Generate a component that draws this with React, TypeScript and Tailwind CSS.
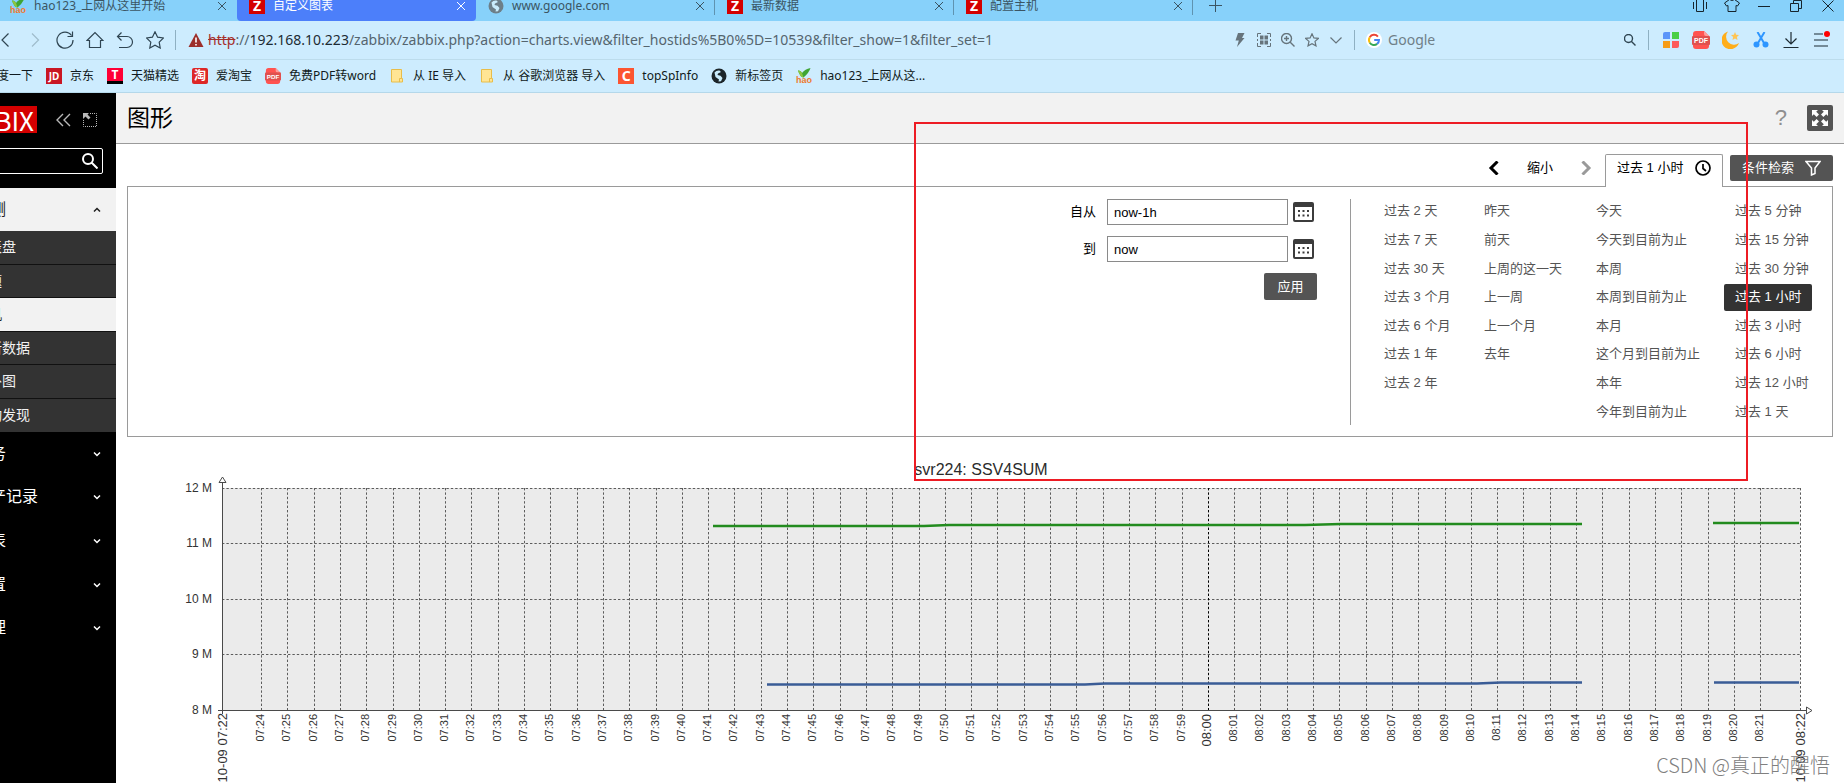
import type { ReactNode } from 'react'
import clsx from 'clsx'

/* ---------- icons ---------- */

type IconProps = { d: string; size?: number; className?: string; width?: number }

function Stroke({ d, size = 18, className, width = 1 }: IconProps) {
  return (
    <svg
      viewBox={`0 0 ${size} ${size}`}
      width={size}
      height={size}
      className={clsx('shrink-0', className)}
      fill="none"
      stroke="currentColor"
      strokeWidth={width}
      aria-hidden="true"
    >
      <path d={d} />
    </svg>
  )
}

function HaoIcon() {
  return (
    <svg viewBox="0 0 16 16" className="h-4 w-4 shrink-0" aria-hidden="true">
      <path d="M2 2.500q3-.5 4 2.500Q9 1 14.500 0 13 5 7.500 9.500 4 9 2 2.500z" fill="#3fa535" />
      <path d="M2 2.500q3-.5 4 2.500l1.500 4.500Q4 9 2 2.500z" fill="#8cc63f" />
      <text x="0" y="15" fontSize="9" fontWeight="700" fill="#ee7a30" fontFamily="Liberation Sans, sans-serif">
        hao
      </text>
    </svg>
  )
}

function Badge({ label, className }: { label: string; className: string }) {
  return (
    <span
      aria-hidden="true"
      className={clsx('flex h-4 w-4 shrink-0 items-center justify-center leading-4 text-white', className)}
    >
      {label}
    </span>
  )
}

function ZIcon() {
  return <Badge label="Z" className="bg-[#d40000] text-sm font-bold" />
}

function GlobeIcon({ className }: { className?: string }) {
  return (
    <svg viewBox="0 0 16 16" className={clsx('h-4 w-4 shrink-0', className)} aria-hidden="true">
      <circle cx="8" cy="8" r="7.500" fill="currentColor" />
      <path
        d="M3.500 4.500Q5.500 2 8.500 2.500L10 4 7 5.500 6.500 7l3 .8 2 2.200-1.500 3.200-2.500.3L8 11.500 4.500 9z"
        fill="#c9ecfc"
      />
    </svg>
  )
}

function PdfIcon({ className }: { className: string }) {
  return (
    <svg viewBox="0 0 18 18" className={clsx('shrink-0', className)} aria-hidden="true">
      <path d="M4 0h8l5 5v10a3 3 0 0 1-3 3H4a3 3 0 0 1-3-3V3a3 3 0 0 1 3-3z" fill="#ff5350" />
      <path d="M12 0l5 5h-3a2 2 0 0 1-2-2z" fill="#ff9e9b" />
      <rect x="0" y="5" width="18" height="9" rx="1" fill="#e0504e" />
      <text
        x="9"
        y="12"
        textAnchor="middle"
        fontSize="7"
        fontWeight="700"
        fill="#fff"
        fontFamily="Liberation Sans, sans-serif"
      >
        PDF
      </text>
    </svg>
  )
}

function FolderIcon() {
  return (
    <svg viewBox="0 0 16 16" className="h-4 w-4 shrink-0" aria-hidden="true">
      <path d="M2.500 1.500h10v9h1v3.500h-11z" fill="#ffe594" stroke="#e8bd4a" />
      <path d="M10.500 14v-3.500h2" fill="none" stroke="#e8bd4a" />
    </svg>
  )
}

function GoogleIcon() {
  return (
    <svg viewBox="0 0 16 16" className="h-4 w-4 shrink-0" fill="none" strokeWidth="2" aria-hidden="true">
      <circle cx="8" cy="8" r="8" fill="#fff" />
      <path d="M11.900 4.600A5 5 0 0 0 3.800 5.300" stroke="#ea4335" />
      <path d="M3.800 5.300a5 5 0 0 0 0 5.400" stroke="#fbbc05" />
      <path d="M3.800 10.700a5 5 0 0 0 7.300 1.200" stroke="#34a853" />
      <path d="M11.100 11.900A5 5 0 0 0 13 8H8.200" stroke="#4285f4" />
    </svg>
  )
}

function Chevron({ up }: { up?: boolean }) {
  return <Stroke size={8} d={up ? 'M1 5.500l3-3 3 3' : 'M1 2.500l3 3 3-3'} className="stroke-[1.500]" />
}

function CalendarIcon() {
  return (
    <svg viewBox="0 0 21 20" className="h-5 w-[21px]" aria-hidden="true">
      <rect x="1" y="1" width="19" height="18" rx="1" fill="#fff" stroke="#3c3c3c" strokeWidth="2" />
      <rect x="1" y="1" width="19" height="4" fill="#3c3c3c" />
      <path d="M5 9h2m2.500 0h2m2.500 0h2M5 13.500h2m2.500 0h2m2.500 0h2" stroke="#3c3c3c" strokeWidth="2" />
    </svg>
  )
}

/* ---------- browser ---------- */

const tabs: { title: string; icon: ReactNode; active?: boolean; divider?: boolean }[] = [
  { title: 'hao123_上网从这里开始', icon: <HaoIcon /> },
  { title: '自定义图表', icon: <ZIcon />, active: true },
  { title: 'www.google.com', icon: <GlobeIcon className="text-[#6d7f89]" />, divider: true },
  { title: '最新数据', icon: <ZIcon />, divider: true },
  { title: '配置主机', icon: <ZIcon />, divider: true },
]

const windowButtons = [
  { label: '振动', size: 14, d: 'M.5 3v7M13.500 3v7M3.500 .5h7v12h-7z' },
  { label: '皮肤', size: 16, d: 'M5.500 1.500q2.500 2 5 0L15.500 5l-2 3-1.500-.5v6H4v-6L2.500 8l-2-3z' },
  { label: '最小化', size: 12, d: 'M0 6.500h12' },
  { label: '还原', size: 12, d: 'M.5 3.500h8v8h-8zM3.500 3V.5h8v8H9' },
  { label: '关闭', size: 12, d: 'M.5 .5l11 11M11.500 .5l-11 11' },
]

function TabBar() {
  return (
    <div className="h-[21px] overflow-hidden bg-[#87d1fa]">
      <div className="-mt-[10px] flex h-[31px] items-center text-xs text-[#3b5563]">
        <div className="-ml-[2px] flex h-full">
          {tabs.map((tab) => (
            <div
              key={tab.title}
              className={clsx(
                'relative flex w-[239px] items-center gap-2 pr-[10px] pl-3',
                tab.active && 'rounded-b-sm bg-[#4c7ffa] text-white',
              )}
            >
              {tab.icon}
              <span className="flex-1">{tab.title}</span>
              <button type="button" aria-label="关闭标签页">
                <Stroke size={10} d="M1 1l8 8M9 1L1 9" />
              </button>
              {tab.divider && <span className="absolute right-0 bottom-[6px] h-5 w-px bg-[#5f93b0]" />}
            </div>
          ))}
        </div>
        <button type="button" aria-label="新建标签页" className="ml-4 flex-none">
          <Stroke size={14} d="M0 6.500h13M6.500 0v13" />
        </button>
        <div className="ml-auto flex items-center text-[#16242c]">
          {windowButtons.map((b) => (
            <button key={b.label} type="button" aria-label={b.label} className="flex w-8 justify-center">
              <Stroke size={b.size} d={b.d} />
            </button>
          ))}
        </div>
      </div>
    </div>
  )
}

const navButtons = [
  { label: '后退', d: 'M12.500 2.500L6 9l6.500 6.500' },
  { label: '前进', d: 'M6 2.500L12.500 9 6 15.500', muted: true },
  { label: '刷新', d: 'M15.500 4.500a8 8 0 1 0 1.500 4.500M16.500 .5v5h-5' },
  { label: '主页', d: 'M1 9.500l8-8 8 8h-2.500v7h-11v-7z' },
  { label: '恢复', d: 'M5.500 1.500l-4 4 4 4M1.500 5.500H11a5 5 0 0 1 0 11H3' },
  { label: '收藏', d: 'M9 .8l2.600 5.400 5.900.8-4.300 4.100 1 5.900L9 14.200 3.800 17l1-5.900L.5 7l5.900-.8z' },
]

function AddressBar() {
  return (
    <div className="flex h-[39px] items-center border-b border-[#bcdcec] pr-2 text-sm">
      <div className="-ml-[10px] flex text-[#2f4552]">
        {navButtons.map((b) => (
          <button
            key={b.label}
            type="button"
            aria-label={b.label}
            className={clsx('flex w-[30px] justify-center', b.muted && 'text-[#9fbccb]')}
          >
            <Stroke d={b.d} className="stroke-[1.200]" />
          </button>
        ))}
      </div>
      <span className="ml-[5px] h-5 w-px bg-[#8fb0c2]" />
      <svg viewBox="0 0 16 14" className="ml-3 h-3.5 w-4 shrink-0" aria-hidden="true">
        <path d="M8 0l7.500 14H.5z" fill="#9c2f2b" />
        <path d="M8 4.500v5M8 11v1.500" stroke="#fff" strokeWidth="1.600" />
      </svg>
      <div className="ml-1 flex-1 whitespace-nowrap text-[#55656e]">
        <span className="text-[#a5302c] line-through">http</span>://
        <span className="text-[#1d2b33]">192.168.10.223</span>
        /zabbix/zabbix.php?action=charts.view&amp;filter_hostids%5B0%5D=10539&amp;filter_show=1&amp;filter_set=1
      </div>
      <div className="flex text-[#66747c]">
        <button type="button" aria-label="极速模式" className="flex w-6 justify-center">
          <svg viewBox="0 0 10 14" className="h-3.5 w-2.5" fill="currentColor" aria-hidden="true">
            <path d="M3 0h6.500L7 5h2.500L2 14l1.800-6.500H.5z" />
          </svg>
        </button>
        <button type="button" aria-label="二维码" className="flex w-6 justify-center">
          <svg viewBox="0 0 14 14" className="h-3.5 w-3.5" fill="none" stroke="currentColor" aria-hidden="true">
            <path d="M4 .5H.5V4M10 .5h3.500V4M4 13.500H.5V10M10 13.500h3.500V10M.5 6v2M13.500 6v2" />
            <path d="M3 4.500h3.500M7.500 4.500H11M3 9.500h3.500M7.500 9.500H11" strokeWidth="4" />
          </svg>
        </button>
        <button type="button" aria-label="缩放" className="flex w-6 justify-center">
          <Stroke
            size={14}
            d="M9.500 9.500L13.500 13.500M5.500 3v5M3 5.500h5M10.500 5.500a5 5 0 1 1-10 0 5 5 0 0 1 10 0z"
            className="stroke-[1.400]"
          />
        </button>
        <button type="button" aria-label="加入收藏" className="flex w-6 justify-center">
          <Stroke
            size={14}
            d="M7 .8l1.900 4.100 4.500.5-3.400 3 1 4.500L7 10.700 3 12.900l1-4.500-3.400-3 4.500-.5z"
            className="stroke-[1.200]"
          />
        </button>
        <button type="button" aria-label="更多" className="flex w-6 items-center justify-center">
          <Stroke size={12} d="M.5 3.500L6 9l5.500-5.500" className="stroke-[1.200]" />
        </button>
      </div>
      <span className="ml-[6px] h-5 w-px bg-[#8fb0c2]" />
      <div className="flex w-[293px] items-center pr-3 pl-[11px]">
        <GoogleIcon />
        <input
          type="text"
          aria-label="搜索"
          placeholder="Google"
          className="ml-1.5 min-w-0 flex-1 bg-transparent outline-none placeholder:text-[#6f7f88]"
        />
        <button type="button" aria-label="搜索">
          <Stroke
            size={12}
            d="M7.500 7.500l4 4M8.500 4.500a4 4 0 1 1-8 0 4 4 0 0 1 8 0z"
            className="stroke-[1.400] text-[#2f4552]"
          />
        </button>
      </div>
      <span className="mr-[7px] h-5 w-px bg-[#8fb0c2]" />
      <div className="flex items-center text-[#1d2b33]">
        <button type="button" aria-label="扩展" className="flex w-[30px] justify-center">
          <svg viewBox="0 0 16 16" className="h-4 w-4" aria-hidden="true">
            <path d="M0 2a2 2 0 0 1 2-2h5v7H0z" fill="#5b95f9" />
            <path d="M9 0h7v7H9z" fill="#48cf46" />
            <path d="M0 9h7v7H0z" fill="#f69c16" />
            <path d="M9 9h7v5a2 2 0 0 1-2 2H9z" fill="#fd5b5b" />
          </svg>
        </button>
        <button type="button" aria-label="PDF" className="flex w-[30px] justify-center">
          <PdfIcon className="h-[18px] w-[18px]" />
        </button>
        <button type="button" aria-label="夜间模式" className="flex w-[30px] justify-center">
          <svg viewBox="0 0 18 18" className="h-[18px] w-[18px]" aria-hidden="true">
            <path d="M6 .5a9 9 0 1 0 11 11.500A8 8 0 0 1 6 .5z" fill="#ffae1a" />
            <path d="M13 1l1.200 2.700 2.800.3-2.100 2 .6 2.900-2.500-1.500-2.500 1.500.6-2.900-2.100-2 2.800-.3z" fill="#ffc555" />
          </svg>
        </button>
        <button type="button" aria-label="截图" className="flex w-[30px] justify-center">
          <svg viewBox="0 0 16 16" className="h-4 w-4" fill="none" stroke="#2e96ff" aria-hidden="true">
            <path d="M4.500 0L11 11M11.500 0L5 11" strokeWidth="2" />
            <circle cx="3.500" cy="12.500" r="3" fill="#2e96ff" stroke="none" />
            <circle cx="12.500" cy="12.500" r="3" fill="#2e96ff" stroke="none" />
          </svg>
        </button>
        <button type="button" aria-label="下载" className="flex w-[30px] justify-center">
          <Stroke size={16} d="M8 0v12M2.500 6.500L8 12l5.500-5.500M.5 15.500h15" className="stroke-[1.200]" />
        </button>
        <button type="button" aria-label="菜单" className="relative flex w-[30px] justify-center">
          <Stroke size={14} d="M0 1h9M0 7h14M0 13h14" className="stroke-[1.200]" />
          <span className="absolute -top-[2px] right-[6px] h-1.5 w-1.5 rounded-full bg-[#f00]" />
        </button>
      </div>
    </div>
  )
}

const bookmarks: { label: string; icon?: ReactNode }[] = [
  { label: '百度一下' },
  { label: '京东', icon: <Badge label="JD" className="bg-[#c91623] text-[10px] font-bold" /> },
  { label: '天猫精选', icon: <Badge label="T" className="border-b-3 border-black bg-[#ff0036] text-xs font-bold" /> },
  { label: '爱淘宝', icon: <Badge label="淘" className="rounded-xs bg-[#dd2727] text-xs font-bold" /> },
  { label: '免费PDF转word', icon: <PdfIcon className="h-4 w-4" /> },
  { label: '从 IE 导入', icon: <FolderIcon /> },
  { label: '从 谷歌浏览器 导入', icon: <FolderIcon /> },
  { label: 'topSpInfo', icon: <Badge label="C" className="bg-[#fc5531] text-sm font-bold" /> },
  { label: '新标签页', icon: <GlobeIcon className="text-[#1c2529]" /> },
  { label: 'hao123_上网从这...', icon: <HaoIcon /> },
]

function BookmarkBar() {
  return (
    <nav className="flex h-[33px] items-center gap-[13px] border-b border-[#b5d8ea] text-xs text-[#101a20]">
      {bookmarks.map((b, i) => (
        <a key={b.label} href="#" className={clsx('flex items-center gap-2 whitespace-nowrap', i === 0 && '-ml-[15px]')}>
          {b.icon}
          {b.label}
        </a>
      ))}
    </nav>
  )
}

/* ---------- zabbix ---------- */

const subMenu = ['仪表盘', '问题', '主机', '最新数据', '拓扑图', '自动发现']
const menu = ['服务', '资产记录', '报表', '配置', '管理']

function Sidebar() {
  return (
    <aside className="w-[116px] shrink-0 overflow-hidden bg-black text-white">
      <div className="-ml-[70px] flex items-center pt-[13px]">
        <a
          href="#"
          className="flex h-[27px] w-[107px] items-center justify-end bg-[#d40000] pr-[3px] font-['Noto_Sans_CJK_SC',sans-serif] text-[26px] leading-[27px]"
        >
          ZABBIX
        </a>
        <button type="button" aria-label="折叠" className="ml-[18px] text-[#b8b8b8]">
          <Stroke size={16} d="M8 2L2 8l6 6M15 2L9 8l6 6" className="stroke-[1.400]" />
        </button>
        <button type="button" aria-label="隐藏" className="ml-3 text-[#b8b8b8]">
          <svg viewBox="0 0 14 14" className="h-3.5 w-3.5" fill="none" stroke="currentColor" aria-hidden="true">
            <path d="M7 .5h6.500v13H.5V7" strokeDasharray="1 1" />
            <path d="M0 0h6L4.500 1.500l3 3-2 2-3-3L0 6z" fill="currentColor" stroke="none" />
          </svg>
        </button>
      </div>
      <div className="mt-[15px] mr-[13px] -ml-[26px] flex h-[26px] items-center rounded-xs border border-white pr-1">
        <input type="search" aria-label="搜索" className="min-w-0 flex-1 bg-transparent outline-none" />
        <button type="button" aria-label="搜索">
          <Stroke size={16} d="M10 10l5.500 5.500M11 6A5 5 0 1 1 1 6a5 5 0 0 1 10 0z" className="stroke-2" />
        </button>
      </div>

      <button
        type="button"
        className="mt-[14px] -ml-[26px] flex h-[43px] w-[142px] items-center justify-between bg-[#f2f2f2] pr-[15px] text-base text-[#1f1f1f]"
      >
        监测
        <Chevron up />
      </button>
      <ul className="grid h-[201px] grid-rows-6 text-sm">
        {subMenu.map((item) => (
          <li
            key={item}
            className={clsx(
              'border-b border-[#111] last:border-b-0',
              item === '主机' ? 'bg-[#f2f2f2] text-[#1f1f1f]' : 'bg-[#333] text-[#f2f2f2]',
            )}
          >
            <a href="#" className="-ml-[26px] flex h-full items-center whitespace-nowrap">
              {item}
            </a>
          </li>
        ))}
      </ul>
      <ul className="grid h-[218px] grid-rows-5 text-base">
        {menu.map((item) => (
          <li key={item} className="flex">
            <button
              type="button"
              className="-ml-[26px] flex w-[142px] items-center justify-between pr-[15px] whitespace-nowrap"
            >
              {item}
              <Chevron />
            </button>
          </li>
        ))}
      </ul>
    </aside>
  )
}

const ranges = [
  ['过去 2 天', '过去 7 天', '过去 30 天', '过去 3 个月', '过去 6 个月', '过去 1 年', '过去 2 年'],
  ['昨天', '前天', '上周的这一天', '上一周', '上一个月', '去年'],
  ['今天', '今天到目前为止', '本周', '本周到目前为止', '本月', '这个月到目前为止', '本年', '今年到目前为止'],
  ['过去 5 分钟', '过去 15 分钟', '过去 30 分钟', '过去 1 小时', '过去 3 小时', '过去 6 小时', '过去 12 小时', '过去 1 天'],
]

function TimeField({ id, label, value }: { id: string; label: string; value: string }) {
  return (
    <div className="flex items-center">
      <label htmlFor={id}>{label}</label>
      <input
        id={id}
        type="text"
        defaultValue={value}
        className="ml-[11px] h-[26px] w-[181px] border border-[#8a8a8a] bg-white px-1.5 outline-none"
      />
      <button type="button" aria-label="日历" className="mr-[3px] ml-[5px]">
        <CalendarIcon />
      </button>
    </div>
  )
}

function TimeFilter() {
  return (
    <section className="px-[11px] text-[13px] leading-5">
      <div className="flex h-[42px] items-end justify-end">
        <div className="flex h-[37px] items-center">
          <button type="button" aria-label="向前">
            <Stroke size={14} d="M10.500 .5L4 7l6.500 6.500" className="stroke-3 text-black" />
          </button>
          <button type="button" className="mx-[26px]">
            缩小
          </button>
          <button type="button" aria-label="向后">
            <Stroke size={14} d="M3.500 .5L10 7l-6.500 6.500" className="stroke-3 text-[#9a9a9a]" />
          </button>
        </div>
        <button
          type="button"
          className="relative -mb-px ml-3 flex h-[33px] w-[118px] items-center justify-between rounded-t-xs border border-b-0 border-[#9a9a9a] bg-white px-[11px] pb-1.5"
        >
          过去 1 小时
          <Stroke size={16} d="M15 8A7 7 0 1 1 1 8a7 7 0 0 1 14 0zM8 4v4.500l3 2.500" className="stroke-[1.700]" />
        </button>
        <button
          type="button"
          className="mb-[5px] ml-[7px] flex h-[26px] w-[103px] items-center justify-between rounded-xs bg-[#545454] px-3 text-white"
        >
          条件检索
          <Stroke size={16} d="M1 1.500h14L10 8v5.500L6.500 15V8z" className="stroke-[1.500]" />
        </button>
      </div>
      <div className="flex justify-end border border-[#9a9a9a] py-[10px] pr-[11px]">
        <form className="mt-[2px] mr-[33px] flex flex-col items-end gap-[11px]">
          <TimeField id="from" label="自从" value="now-1h" />
          <TimeField id="to" label="到" value="now" />
          <button type="button" className="h-[27px] w-[53px] rounded-xs bg-[#545454] text-white">
            应用
          </button>
        </form>
        <div className="mt-[2px] mb-px w-px bg-[#9a9a9a]" />
        <div className="ml-[22px] grid grid-cols-[100px_112px_139px_97px] text-[#545454]">
          {ranges.map((column) => (
            <ul key={column[0]} className="grid h-[229px] grid-rows-8">
              {column.map((range) => (
                <li key={range} className="flex items-center">
                  <a
                    href="#"
                    className={clsx(
                      'flex h-[27px] items-center rounded-xs px-[11px] whitespace-nowrap',
                      range === '过去 1 小时' && 'bg-[#333] text-white',
                    )}
                  >
                    {range}
                  </a>
                </li>
              ))}
            </ul>
          ))}
        </div>
      </div>
    </section>
  )
}

/* ---------- graph ---------- */

const LEFT = 106
const RIGHT = 1684
const TOP = 51
const BOTTOM = 273

const yTicks = [
  { y: 51, label: '12 M' },
  { y: 106, label: '11 M' },
  { y: 162, label: '10 M' },
  { y: 217, label: '9 M' },
  { y: 273, label: '8 M' },
]

// one grid line per minute, 07:24 to 08:21
const xTicks = Array.from({ length: 58 }, (_, i) => {
  const minute = 24 + i
  const hour = minute < 60 ? '07' : '08'
  return {
    x: Math.round(145 + i * 26.3),
    label: `${hour}:${String(minute % 60).padStart(2, '0')}`,
  }
})

function Graph() {
  return (
    <svg
      viewBox="0 0 1728 346"
      className="block w-full"
      fontFamily="'Liberation Sans', sans-serif"
      fill="#333"
      role="img"
      aria-label="svr224: SSV4SUM"
    >
      <text x="865" y="38" textAnchor="middle" fontSize="16" fill="#2b2b2b">
        svr224: SSV4SUM
      </text>
      <rect x={LEFT} y={TOP} width={RIGHT - LEFT} height={BOTTOM - TOP} fill="#ebebeb" />
      <g stroke="#5c5c5c" strokeDasharray="2.400 2">
        {yTicks.slice(0, 4).map((t) => (
          <path key={t.y} d={`M${LEFT} ${t.y + 0.5}H${RIGHT}`} />
        ))}
        {xTicks.map((t) => (
          <path key={t.x} d={`M${t.x + 0.5} ${TOP}V${BOTTOM}`} stroke={t.label === '08:00' ? '#000' : '#5c5c5c'} />
        ))}
        <path d={`M${RIGHT + 0.5} ${TOP}V${BOTTOM}`} />
      </g>
      <g fill="none" strokeWidth="2.500">
        <path d="M597 89H808L833 88H1189L1225 87H1466M1597 86H1683" stroke="#228b1e" />
        <path d="M651 247.500H969L989 246.500H1361L1385 245.500H1466M1598 245.500H1683" stroke="#3a5c96" />
      </g>
      <g fill="#fff" stroke="#4a4a4a">
        <path d="M102 273.500H1690M106.500 277V45" fill="none" />
        <path d="M103 45.500h7l-3.500-5.500zM1690.500 270v7l5.500-3.500z" />
      </g>
      <g fontSize="12" textAnchor="end">
        {yTicks.map((t) => (
          <text key={t.label} x="96" y={t.y + 4}>
            {t.label}
          </text>
        ))}
      </g>
      <g fontSize="13" textAnchor="end">
        <text transform="translate(111 276) rotate(-90)">10-09 07:22</text>
        <text transform="translate(1689 276) rotate(-90)">10-09 08:22</text>
      </g>
      <g textAnchor="end">
        {xTicks.map((t) => (
          <text
            key={t.label}
            fontSize={t.label === '08:00' ? 13 : 11}
            transform={`translate(${t.x + 3} 277) rotate(-90)`}
          >
            {t.label}
          </text>
        ))}
      </g>
    </svg>
  )
}

export default function App() {
  return (
    <div className="relative min-h-screen overflow-hidden bg-white">
      <header className="bg-[#cdecfe] font-['Noto_Sans','Noto_Sans_CJK_SC',sans-serif]">
        <TabBar />
        <AddressBar />
        <BookmarkBar />
      </header>
      <div className="flex font-['Liberation_Sans','Noto_Sans_CJK_SC',sans-serif] text-black">
        <Sidebar />
        <main className="min-w-0 flex-1">
          <div className="flex h-[51px] items-center border-b border-[#9a9a9a] bg-[#f2f2f2] px-[11px]">
            <h1 className="text-[23px] leading-8">图形</h1>
            <a href="#" aria-label="帮助" className="ml-auto text-[22px] leading-6 text-[#8f8f8f]">
              ?
            </a>
            <button
              type="button"
              aria-label="全屏"
              className="ml-5 flex h-[26px] w-[26px] items-center justify-center rounded-xs bg-[#545454] text-white"
            >
              <svg viewBox="0 0 16 16" className="h-4 w-4" aria-hidden="true">
                <path
                  d="M0 0h6L4.200 1.800 7 4.600 4.600 7 1.800 4.200 0 6zM16 0v6l-1.800-1.800L11.400 7 9 4.600l2.800-2.800L10 0zM0 16v-6l1.800 1.800L4.600 9 7 11.400l-2.800 2.800L6 16zM16 16h-6l1.800-1.800L9 11.400 11.400 9l2.800 2.800L16 10z"
                  fill="currentColor"
                />
              </svg>
            </button>
          </div>
          <TimeFilter />
          <Graph />
        </main>
      </div>

      {/* annotation frame and watermark lie over the page */}
      <div className="pointer-events-none absolute top-[122px] right-[96px] h-[359px] w-[834px] border-2 border-[#ed1c24]" />
      <p className="absolute right-[14px] bottom-1 font-['Noto_Sans_CJK_SC',sans-serif] text-xl leading-7 font-light text-[#808080]">
        CSDN @真正的醒悟
      </p>
    </div>
  )
}
